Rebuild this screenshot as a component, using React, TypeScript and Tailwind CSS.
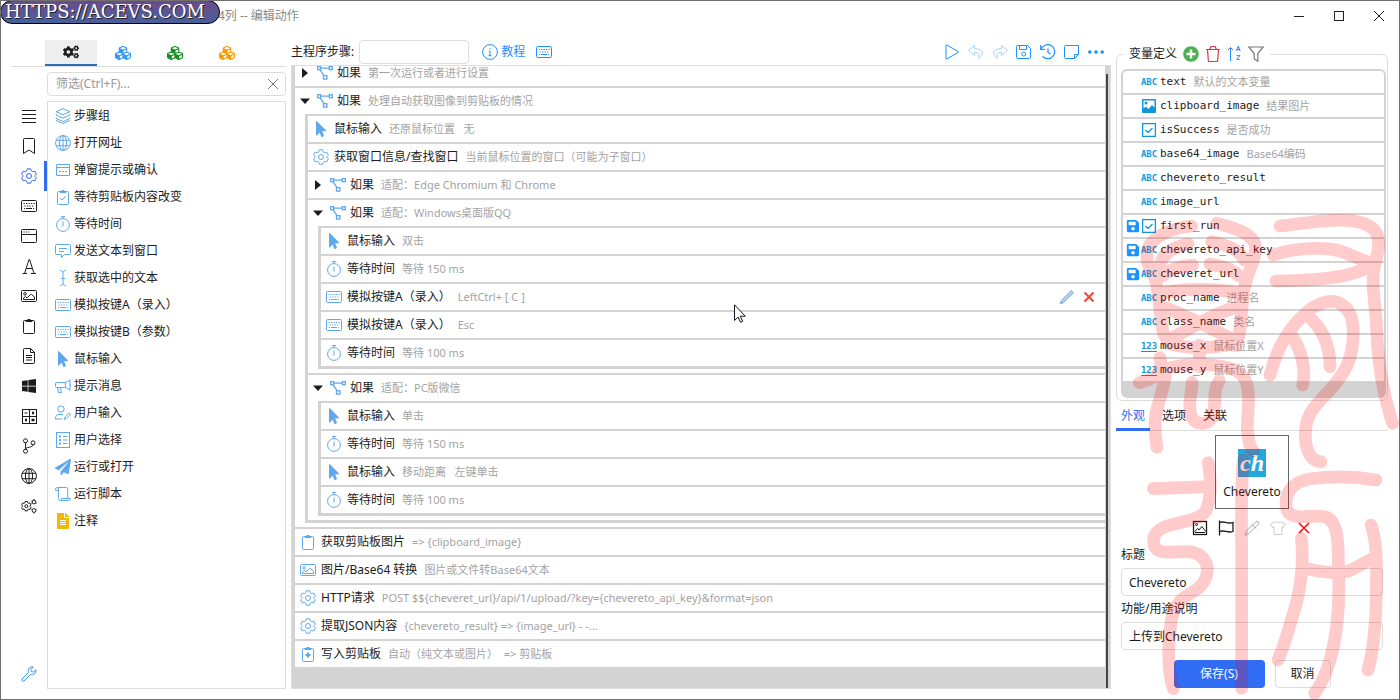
import type { ReactNode } from "react";
import {
  FaCogs,
  FaCubes,
  FaFileAlt,
  FaMousePointer,
  FaPaperPlane,
  FaPlusCircle,
  FaSave,
  FaWindows,
} from "react-icons/fa";

// 16x16 line icons
const glyphs: Record<string, ReactNode> = {
  menu: <path d="M1 2.500h14M1 6.500h14M1 10.500h14M1 14.500h14" />,
  bookmark: <path d="M2.500 1.500a1 1 0 0 1 1-1h9a1 1 0 0 1 1 1v14L8 12l-5.500 3.500z" />,
  gear: (
    <>
      <path d="M6.300.8h3.400l.5 2 1.500.9 2-.6 1.700 3L14 7.500v1l1.400 1.400-1.700 3-2-.6-1.500.9-.5 2H6.300l-.5-2-1.500-.9-2 .6-1.700-3L2 8.500v-1L.600 6.100l1.700-3 2 .6 1.500-.9z" />
      <circle cx="8" cy="8" r="2.500" />
    </>
  ),
  keyboard: (
    <>
      <rect x=".5" y="2.500" width="15" height="11" rx="1" />
      <path d="M2.500 5.500H14M3.500 8H13" strokeDasharray="1.300 1.200" />
      <path d="M3 10.500h1M5 10.500h6M12 10.500h1" />
    </>
  ),
  window: (
    <>
      <rect x=".5" y="1.500" width="15" height="13" rx="1" />
      <path d="M.5 6.500h15M2.500 4h1.200M4.900 4h1.200M7.300 4h1.200" />
    </>
  ),
  letter: <path d="M1.500 15.500h4.500M10 15.500h5M3.500 15.500 8 1.500h.6L13 15.500M5.200 10.500h6.200" />,
  image: (
    <>
      <rect x=".5" y="2.500" width="15" height="11" rx="1" />
      <circle cx="4" cy="5.800" r="1.300" />
      <path d="M2.500 11.500V10l2-1.500L6 10l3.500-3.500h1L13.500 9v2.500z" />
    </>
  ),
  clipboard: (
    <>
      <rect x="2.500" y="2.500" width="11" height="13" rx="1" />
      <path d="M5 2.500h6v1H5zM6.500 1.500h3" />
    </>
  ),
  clipCheck: (
    <>
      <rect x="2.500" y="2.500" width="11" height="13" rx="1" />
      <path d="M5 2.500h6v1H5zM6.500 1.500h3M5 9l2 2 4-4" />
    </>
  ),
  clipPlus: (
    <>
      <rect x="2.500" y="2.500" width="11" height="13" rx="1" />
      <path d="M5 2.500h6v1H5zM6.500 1.500h3" />
      <path d="M8 6.500v5M5.500 9h5" strokeWidth="2" />
    </>
  ),
  file: <path d="M3.500.5h6l4 4v10a1 1 0 0 1-1 1h-9a1 1 0 0 1-1-1v-13a1 1 0 0 1 1-1zM9.500.5v4h4M5 7.500h6M5 9.500h6M5 12h6" />,
  calc: (
    <>
      <rect x="1.500" y="1.500" width="14" height="14" />
      <path d="M8.500 1.500v14M1.500 8.500h14M3.500 5h3" />
      <path d="M4 12h2M11 5h2M10.500 12h3" strokeWidth="2.600" />
    </>
  ),
  branch: (
    <>
      <circle cx="4.500" cy="2.800" r="2" />
      <circle cx="12" cy="4.800" r="2" />
      <circle cx="4.500" cy="13.200" r="2" />
      <path d="M4.500 4.800v6.400M12 6.800c0 3-7.500 2-7.500 4.400" />
    </>
  ),
  globe: (
    <>
      <circle cx="8" cy="8" r="7.400" />
      <ellipse cx="8" cy="8" rx="3.600" ry="7.400" />
      <path d="M8 .6v14.800M1.300 5.300h13.400M1.300 10.700h13.400" />
    </>
  ),
  cogs: (
    <>
      <path d="M4.200 3.500h2.200l.3 1.300 1 .5 1.200-.4 1.100 2-.9.900v.8l.9.900-1.100 2-1.200-.4-1 .5-.3 1.300H4.200l-.3-1.300-1-.5-1.200.4-1.100-2 .9-.9v-.8l-.9-.9 1.100-2 1.200.4 1-.5z" />
      <circle cx="5.300" cy="8.200" r="1.500" />
      <circle cx="13" cy="4" r="1.900" />
      <circle cx="13" cy="12.500" r="1.900" />
      <path d="M13 1.200v1M10.500 2.800l.8.400M10.500 5.300l.8-.4M15.500 5.300l-.7-.4M13 14.400v1M10.500 11.300l.8.400M15.500 11.300l-.7.400" />
    </>
  ),
  wrench: <path d="M14.800 3.800a4 4 0 0 1-5.300 4.700L3 15a1.500 1.500 0 0 1-2-2l6.500-6.500A4 4 0 0 1 12.300 1l-2.500 2.600.5 2 2 .5z" />,
  layers: <path d="m8 .7 7 3-7 3-7-3zM1.200 6.200 1 7l7 3.200L15 7l-.2-.8M1.200 9.500l-.2.900 7 3.200 7-3.200-.2-.9M1 12.400l7 3.100 7-3.100" />,
  dialog: (
    <>
      <rect x="1.500" y="2.500" width="13" height="11" rx=".5" />
      <path d="M4 9.500h8" strokeDasharray="2 1" />
      <path d="M1.500 5.500h13" />
    </>
  ),
  timer: (
    <>
      <circle cx="8" cy="9" r="6.400" />
      <path d="M8 5.500v5M8 2.500v-2M6 .6h4" />
    </>
  ),
  message: <path d="M1.500 1.500h13a1 1 0 0 1 1 1v8a1 1 0 0 1-1 1H9.500l-3 3v-3h-5a1 1 0 0 1-1-1v-8a1 1 0 0 1 1-1zM4 5.500h8M4 8.500h5" />,
  cursorText: <path d="M5 .6c2 0 3 .6 3 1.900v11c0 1.300-1 1.900-3 1.900M11 .6c-2 0-3 .6-3 1.900M8 13.500c0 1.300 1 1.900 3 1.900M6 8.500h4" />,
  megaphone: <path d="M15 1.500v11M15 2l-4.500 2.500h-9a1 1 0 0 0-1 1v3a1 1 0 0 0 1 1h9L15 12M10.500 4.500v5M2.500 9.500l1 5h3.200l-1-2.500V9.500M15 6c1 .5 1 2 0 2.500" />,
  userEdit: (
    <>
      <circle cx="6" cy="4" r="3.200" />
      <path d="M8 9.500H4c-2 0-3.500 1.500-3.500 3.500v1h7M9.500 14.500l.5-2.500 4-4 1.500 1.500-4 4z" />
    </>
  ),
  options: (
    <>
      <rect x="1.500" y=".5" width="13" height="15" />
      <path d="M4 4.500h2M4 8h2M4 11.500h2" strokeWidth="2" />
      <path d="M8 4.500h4.500M8 8h4.500M8 11.500h4.500" />
    </>
  ),
  scroll: <path d="M3.500 4.500h-3v-1a1.500 1.500 0 0 1 3-.5v9.500c0 1.200 1 2 2 2h8c1 0 2-.8 2-2H6.500c0 1.200-.5 2-1.500 2M2.200 1.500h9a1.500 1.500 0 0 1 1.500 1.500v9" />,
  flow: (
    <>
      <rect x=".7" y="1.700" width="3" height="3" strokeWidth="1.300" />
      <rect x="12.300" y="1.700" width="3" height="3" strokeWidth="1.300" />
      <rect x="6.500" y="10.700" width="3.400" height="3.400" strokeWidth="1.300" />
      <path d="M3.700 3.200h8.600M3 4.700l4 6" strokeWidth="1.300" />
    </>
  ),
  info: (
    <>
      <circle cx="8" cy="8" r="7.400" />
      <path d="M8 4v1.300M6.800 7H8v4.500M6.500 11.700h3" />
    </>
  ),
  play: <path d="M2 1.300v13.400a.5.5 0 0 0 .7.300L14.300 8.400a.5.500 0 0 0 0-.8L2.700 1a.5.500 0 0 0-.7.300z" />,
  undo: <path d="M6.500 1.500.600 6.500l5.900 5v-3c4.500 0 5.500 1.500 4 6 5.500-3.500 6-9.500-4-10z" />,
  redo: <path d="M9.500 1.500l5.900 5-5.900 5v-3c-4.500 0-5.500 1.500-4 6-5.500-3.500-6-9.500 4-10z" />,
  save: (
    <>
      <path d="M2 1.500h9.500l3 3V13.500a1 1 0 0 1-1 1h-12a1 1 0 0 1-1-1v-11a1 1 0 0 1 1-1zM3.500 1.500v4h7v-4" />
      <circle cx="7.700" cy="10" r="2" />
    </>
  ),
  history: <path d="M.7 1v4.500h4.500M1.200 5A7 7 0 1 1 2.500 12.300M8 4.500v4l2.500 1.500" strokeWidth="1.200" />,
  note: <path d="M1.500 1.500h13v9l-4 4h-9a1 1 0 0 1-1-1v-11a1 1 0 0 1 1-1zM14.500 10.500h-4v4" />,
  dots: (
    <g fill="currentColor" stroke="none">
      <circle cx="1.800" cy="8" r="1.800" />
      <circle cx="8" cy="8" r="1.800" />
      <circle cx="14.200" cy="8" r="1.800" />
    </g>
  ),
  trash: <path d="M1 3.500h14M2.500 3.500l.8 11a1 1 0 0 0 1 1h7.400a1 1 0 0 0 1-1l.8-11M4.500 3.500l1.500-3h4l1.500 3" strokeWidth="1.200" />,
  filter: <path d="M.8 1h14.400L9.800 7.500v7.700L6.200 13V7.500z" strokeWidth="1.200" />,
  close: <path d="m3 3 10 10M13 3 3 13" />,
  picture: (
    <>
      <rect x="1.500" y="1.500" width="13" height="13" strokeWidth="1.300" />
      <path d="m2.500 12 3.200-3.500L7 10l2.800-3.500 4 5M3 12.500h10" />
      <circle cx="4.500" cy="4.500" r="1" />
    </>
  ),
  flag: <path d="M1.500.5v15M1.500 2.500c5-2 7 2 13.500 0v9c-6 2-8-2-13.500 0" strokeWidth="1.300" />,
  picker: <path d="M9 4.500 2.500 11l-.8 2.300-1 1.200.9.900 1.200-1 2.200-.9L11.500 7M7.500 4l4.500 4.500M9.500 4.500 12 1.600a1.800 1.800 0 0 1 2.500 2.500L11.500 7" />,
  shirt: <path d="M5.500 1.500c1 1.500 4 1.500 5 0l4.900 2.700-1.900 3.300-1.500-.7v7.700H4V6.800l-1.500.7L.600 4.200z" />,
  pencil: <path d="m2.300 11.700 9.900-10.200 2.300 2.300L4.300 13.700 1.300 14.700z" fill="#a9d4fa" stroke="#5b9bd5" strokeWidth=".8" />,
  checked: (
    <>
      <rect x="1.600" y="1.600" width="12.800" height="12.800" strokeWidth="1.300" />
      <path d="m4.500 8 2.500 2.500L11.500 6" strokeWidth="1.300" />
    </>
  ),
};

function Glyph({ name, className = "" }: { name: string; className?: string }) {
  const size = `size-4 shrink-0 ${className}`;
  if (name === "pointer") return <FaMousePointer className={size} />;
  if (name === "plane") return <FaPaperPlane className={size} />;
  if (name === "windows") return <FaWindows className={size} />;
  if (name === "remark") return <FaFileAlt className="size-4 shrink-0 text-[#f0b800]" />;
  return (
    <svg viewBox="0 0 16 16" fill="none" stroke="currentColor" strokeWidth="1" className={size} aria-hidden="true">
      {glyphs[name]}
    </svg>
  );
}

const rail = [
  "menu", "bookmark", "gear", "keyboard", "window", "letter", "image",
  "clipboard", "file", "windows", "calc", "branch", "globe", "cogs",
];

const modules = [
  ["layers", "步骤组"],
  ["globe", "打开网址"],
  ["dialog", "弹窗提示或确认"],
  ["clipCheck", "等待剪贴板内容改变"],
  ["timer", "等待时间"],
  ["message", "发送文本到窗口"],
  ["cursorText", "获取选中的文本"],
  ["keyboard", "模拟按键A（录入）"],
  ["keyboard", "模拟按键B（参数）"],
  ["pointer", "鼠标输入"],
  ["megaphone", "提示消息"],
  ["userEdit", "用户输入"],
  ["options", "用户选择"],
  ["plane", "运行或打开"],
  ["scroll", "运行脚本"],
  ["remark", "注释"],
];

type Step = {
  icon: string;
  title: string;
  desc: string;
  open?: boolean;
  active?: boolean;
  children?: Step[];
};

const steps: Step[] = [
  { icon: "flow", title: "如果", desc: "第一次运行或者进行设置", open: false },
  {
    icon: "flow",
    title: "如果",
    desc: "处理自动获取图像到剪贴板的情况",
    open: true,
    children: [
      { icon: "pointer", title: "鼠标输入", desc: "还原鼠标位置   无" },
      { icon: "gear", title: "获取窗口信息/查找窗口", desc: "当前鼠标位置的窗口（可能为子窗口）" },
      { icon: "flow", title: "如果", desc: "适配：Edge Chromium 和 Chrome", open: false },
      {
        icon: "flow",
        title: "如果",
        desc: "适配：Windows桌面版QQ",
        open: true,
        children: [
          { icon: "pointer", title: "鼠标输入", desc: "双击" },
          { icon: "timer", title: "等待时间", desc: "等待 150 ms" },
          { icon: "keyboard", title: "模拟按键A（录入）", desc: "LeftCtrl+ [ C ]", active: true },
          { icon: "keyboard", title: "模拟按键A（录入）", desc: "Esc" },
          { icon: "timer", title: "等待时间", desc: "等待 100 ms" },
        ],
      },
      {
        icon: "flow",
        title: "如果",
        desc: "适配：PC版微信",
        open: true,
        children: [
          { icon: "pointer", title: "鼠标输入", desc: "单击" },
          { icon: "timer", title: "等待时间", desc: "等待 150 ms" },
          { icon: "pointer", title: "鼠标输入", desc: "移动距离   左键单击" },
          { icon: "timer", title: "等待时间", desc: "等待 100 ms" },
        ],
      },
    ],
  },
  { icon: "clipboard", title: "获取剪贴板图片", desc: "=> {clipboard_image}" },
  { icon: "image", title: "图片/Base64 转换", desc: "图片或文件转Base64文本" },
  { icon: "gear", title: "HTTP请求", desc: "POST $${cheveret_url}/api/1/upload/?key={chevereto_api_key}&format=json" },
  { icon: "gear", title: "提取JSON内容", desc: "{chevereto_result} => {image_url} - -..." },
  { icon: "clipPlus", title: "写入剪贴板", desc: "自动（纯文本或图片）  => 剪贴板" },
];

const variables = [
  { type: "text", name: "text", note: "默认的文本变量" },
  { type: "image", name: "clipboard_image", note: "结果图片" },
  { type: "bool", name: "isSuccess", note: "是否成功" },
  { type: "text", name: "base64_image", note: "Base64编码" },
  { type: "text", name: "chevereto_result" },
  { type: "text", name: "image_url" },
  { type: "bool", name: "first_run", saved: true },
  { type: "text", name: "chevereto_api_key", saved: true },
  { type: "text", name: "cheveret_url", saved: true },
  { type: "text", name: "proc_name", note: "进程名" },
  { type: "text", name: "class_name", note: "类名" },
  { type: "number", name: "mouse_x", note: "鼠标位置X" },
  { type: "number", name: "mouse_y", note: "鼠标位置Y" },
];

function StepList({ items }: { items: Step[] }) {
  return (
    <ul>
      {items.map((step, i) => (
        <li key={i} className="border-b-2 border-[#d3d3d3] bg-white last:border-b-0">
          <div className="flex h-[26px] items-center px-[5px]">
            {step.open !== undefined && (
              <button type="button" aria-label="展开或折叠" className="mr-[7px] flex w-[10px] justify-center">
                <svg viewBox="0 0 10 10" className="size-[10px] fill-[#1c1c1c]">
                  {step.open ? <path d="M0 2.500h10l-5 5.500z" /> : <path d="M2 0l6 5-6 5z" />}
                </svg>
              </button>
            )}
            <Glyph name={step.icon} className="text-[#5ea8ee]" />
            <span className={step.open === undefined ? "ml-[5px]" : "ml-1"}>{step.title}</span>
            <span className="ml-[7px] truncate text-[11px] whitespace-pre text-[#a3a3a3]">{step.desc}</span>
            {step.active && (
              <span className="mr-[3px] ml-auto flex items-center gap-[6px]">
                <button type="button" aria-label="编辑"><Glyph name="pencil" /></button>
                <button type="button" aria-label="删除" className="text-[#f44336]">
                  <svg viewBox="0 0 16 16" fill="none" stroke="currentColor" strokeWidth="2" className="size-4">
                    <path d="m3.500 3.500 9 9M12.500 3.500l-9 9" />
                  </svg>
                </button>
              </span>
            )}
          </div>
          {step.children && (
            <div className="pb-1">
              <div className="ml-[10px] border-t-2 border-b-3 border-l-3 border-[#d3d3d3]">
                <StepList items={step.children} />
              </div>
            </div>
          )}
        </li>
      ))}
    </ul>
  );
}

function VariableIcon({ type }: { type: string }) {
  if (type === "bool") return <Glyph name="checked" />;
  if (type === "image") {
    return (
      <svg viewBox="0 0 16 16" className="size-4 shrink-0">
        <rect x="1" y="1" width="14" height="14" rx="1" fill="currentColor" />
        <path d="M2.500 2.500h11v7L11 7l-3.500 4L5 8.500l-2.500 2z" fill="#fff" />
        <circle cx="5" cy="5" r="1.500" fill="currentColor" />
      </svg>
    );
  }
  return (
    <span
      className={`flex h-3 w-4 shrink-0 items-center justify-center font-['DejaVu_Sans_Mono',monospace] text-[9px] font-bold ${
        type === "number" ? "border-b border-current" : ""
      }`}
    >
      {type === "number" ? "123" : "ABC"}
    </span>
  );
}

function LeftPanel() {
  return (
    <aside className="flex w-[275px] shrink-0 flex-col">
      <nav className="flex border-b border-[#ddd] pl-[34px]">
        <button type="button" aria-label="常用" className="flex h-[26px] w-[52px] items-center justify-center border-b-2 border-[#2a6fb5] bg-[#eee]">
          <FaCogs className="size-4" />
        </button>
        <button type="button" aria-label="蓝色模块" className="flex h-[26px] w-[52px] items-center justify-center text-[#3296fa]">
          <FaCubes className="size-4" />
        </button>
        <button type="button" aria-label="绿色模块" className="flex h-[26px] w-[52px] items-center justify-center text-[#12921c]">
          <FaCubes className="size-4" />
        </button>
        <button type="button" aria-label="橙色模块" className="flex h-[26px] w-[52px] items-center justify-center text-[#fa9a00]">
          <FaCubes className="size-4" />
        </button>
      </nav>
      <div className="flex min-h-0 flex-1">
        <div className="flex w-9 shrink-0 flex-col pt-[34px]">
          {rail.map((name) => (
            <button
              key={name}
              type="button"
              aria-label={name}
              className={`flex h-[30px] items-center justify-center ${
                name === "gear" ? "border-r-3 border-[#316cf4] pl-[3px] text-[#316cf4]" : ""
              }`}
            >
              <Glyph name={name} />
            </button>
          ))}
          <button type="button" aria-label="工具" className="mt-auto flex h-[30px] items-center justify-center text-[#3296fa]">
            <Glyph name="wrench" />
          </button>
        </div>
        <div className="flex min-w-0 flex-1 flex-col gap-[5px] pt-[5px]">
          <div className="flex h-6 items-center rounded-sm border border-[#ddd] px-2">
            <input aria-label="筛选" placeholder="筛选(Ctrl+F)..." className="min-w-0 flex-1 outline-none placeholder:text-[#999]" />
            <button type="button" aria-label="清除" className="-mr-1 text-[#777]"><Glyph name="close" /></button>
          </div>
          <ul className="flex-1 border border-[#ddd]">
            {modules.map(([icon, label]) => (
              <li key={label} className="flex h-[27px] items-center gap-[3px] px-[7px]">
                <Glyph name={icon} className="text-[#5ea8ee]" />
                {label}
              </li>
            ))}
          </ul>
        </div>
      </div>
    </aside>
  );
}

function Editor() {
  return (
    <main className="flex min-w-0 flex-1 flex-col">
      <div className="flex h-[25px] shrink-0 items-center pr-[7px] pb-px text-[#1e90ff]">
        <label htmlFor="step-name" className="text-[#1c1c1c]">主程序步骤:</label>
        <input id="step-name" className="ml-[5px] h-6 w-[110px] rounded-sm border border-[#ddd] px-2 text-[#1c1c1c] outline-none" />
        <a href="#help" className="ml-[13px] flex items-center gap-[3px]">
          <Glyph name="info" />
          教程
        </a>
        <button type="button" aria-label="键盘" className="ml-[11px]"><Glyph name="keyboard" /></button>
        <div className="ml-auto flex items-center gap-2">
          <button type="button" aria-label="运行"><Glyph name="play" /></button>
          <button type="button" aria-label="撤销" disabled className="opacity-40"><Glyph name="undo" /></button>
          <button type="button" aria-label="重做" disabled className="opacity-40"><Glyph name="redo" /></button>
          <button type="button" aria-label="保存"><Glyph name="save" /></button>
          <button type="button" aria-label="历史"><Glyph name="history" /></button>
          <button type="button" aria-label="备注"><Glyph name="note" /></button>
          <button type="button" aria-label="更多"><Glyph name="dots" /></button>
        </div>
      </div>
      <div className="flex min-h-0 flex-1 overflow-hidden border border-[#ddd] bg-[#d3d3d3] pl-[3px]">
        <div className="-mt-1.5 min-w-0 flex-1">
          <StepList items={steps} />
        </div>
        <div className="flex w-[5px] pt-2 pl-px">
          <div className="w-[2px] bg-[#444]" />
        </div>
      </div>
    </main>
  );
}

function VariablePanel() {
  return (
    <fieldset className="min-w-0 rounded-md border border-[#ddd] pr-px pb-[2px] pl-1">
      <legend className="ml-[2px] flex h-[18px] items-center px-[6px]">
        变量定义
        <button type="button" aria-label="添加变量" className="ml-[6px] text-[#4caf50]"><FaPlusCircle className="size-4" /></button>
        <button type="button" aria-label="删除变量" className="ml-[6px] text-[#dc3545]"><Glyph name="trash" /></button>
        <button type="button" aria-label="排序" className="ml-[6px] flex items-center text-[#1e90ff]">
          <svg viewBox="0 0 6 16" fill="none" stroke="currentColor" className="h-4 w-[7px]">
            <path d="M3 15V1.500M.5 4 3 1.500 5.500 4" />
          </svg>
          <span className="flex w-2 flex-col text-center font-['Roboto',sans-serif] text-[7px] leading-[9px] font-bold">
            <span>A</span>
            <span>Z</span>
          </span>
        </button>
        <button type="button" aria-label="筛选变量" className="ml-[6px] text-[#777]"><Glyph name="filter" /></button>
      </legend>
      <ul className="mt-[6px] overflow-hidden rounded-md border-2 border-[#d3d3d3] bg-[#d3d3d3] pb-[13px]">
        {variables.map((v) => (
          <li key={v.name} className="flex h-6 items-center border-b-2 border-[#d3d3d3] bg-white pl-[3px]">
            <span className="flex w-[15px] shrink-0 text-[#1e90ff]">{v.saved && <FaSave className="size-[14px]" />}</span>
            <span className="text-[#1296db]"><VariableIcon type={v.type} /></span>
            <span className="ml-[3px] font-['DejaVu_Sans_Mono',monospace] text-[11px]">{v.name}</span>
            <span className="ml-[7px] text-[11px] text-[#a3a3a3]">{v.note}</span>
          </li>
        ))}
      </ul>
    </fieldset>
  );
}

function Properties() {
  return (
    <section className="flex flex-col">
      <div className="flex h-[30px] gap-[7px] border-b border-[#ddd]">
        <button type="button" className="-mb-px border-b-3 border-[#316cf4] px-[5px] pt-[2px] text-[#316cf4]">外观</button>
        <button type="button" className="px-[5px]">选项</button>
        <button type="button" className="px-[5px]">关联</button>
      </div>
      <div className="mt-[4px] flex h-[74px] w-[74px] flex-col items-center justify-end gap-[7px] self-center border border-[#666] pb-2">
        <span className="flex size-7 items-center justify-center bg-[#23a8e0] font-['Liberation_Serif',serif] text-[24px] leading-6 font-bold text-white italic">ch</span>
        <span className="leading-4">Chevereto</span>
      </div>
      <div className="mt-[11px] flex justify-center gap-[10px]">
        <button type="button" aria-label="选择图片"><Glyph name="picture" /></button>
        <button type="button" aria-label="选择图标"><Glyph name="flag" /></button>
        <button type="button" aria-label="取色" className="text-[#aaa]"><Glyph name="picker" /></button>
        <button type="button" aria-label="皮肤" className="text-[#ccc]"><Glyph name="shirt" /></button>
        <button type="button" aria-label="清除图标" className="text-[#ee1111]">
          <svg viewBox="0 0 16 16" fill="none" stroke="currentColor" strokeWidth="1.600" className="size-4">
            <path d="m3 3 10 10M13 3 3 13" />
          </svg>
        </button>
      </div>
      <form className="flex flex-col px-[5px]">
        <label htmlFor="title" className="mt-[9px] leading-5">标题</label>
        <input id="title" defaultValue="Chevereto" className="mt-[3px] h-7 rounded-sm border border-[#ddd] px-[7px] outline-none" />
        <label htmlFor="purpose" className="mt-[3px] leading-5">功能/用途说明</label>
        <input id="purpose" defaultValue="上传到Chevereto" className="mt-[3px] h-7 rounded-sm border border-[#ddd] px-[7px] outline-none" />
        <div className="mt-[10px] flex justify-center gap-[10px]">
          <button type="submit" className="h-7 w-[91px] rounded-sm bg-[#316cf4] text-white">保存(S)</button>
          <button type="button" className="h-7 w-14 rounded-sm border border-[#ddd]">取消</button>
        </div>
      </form>
    </section>
  );
}

// Seal-script stamp lying over the lower right corner
function SealMark() {
  return (
    <svg
      viewBox="0 0 870 1470"
      fill="none"
      stroke="#ff0000"
      strokeWidth="38"
      strokeLinecap="round"
      strokeLinejoin="round"
      className="pointer-events-none absolute -right-px -bottom-px h-[490px] w-[290px] opacity-20"
      aria-hidden="true"
    >
      <path d="M245 48C190 52 120 80 112 125S135 185 140 225s10 70 14 110 10 45 26 60" />
      <path d="M320 40c50 12 112 30 116 70s-30 85-36 140-6 90-14 130-10 25-16 25" />
      <path d="M235 102c-45 8-75 25-85 62M305 95c50 10 85 25 98 55M248 165c-40 5-70 12-90 32M300 162c40 6 70 18 85 35" />
      <path d="M150 250c70-16 170-16 240 0M160 292c70 22 150 70 215 98M385 290c-60 12-150 70-215 102M175 400c60 18 140 16 205-2" />
      <path d="M268 405v65M88 518c40-10 75-25 62-75M165 478c60-22 170-18 215 5 55 30 30 120 32 170 2 40 10 65 18 70" />
      <path d="M165 500c-5 50-30 90-30 140 0 30 2 50 6 72M328 512c-20 30-10 50-16 90-6 50-66 52-72 0-4-40 8-60 6-85" />
      <path d="M510 48c80-8 180-30 250-8 60 20 48 70 38 110-20 60 0 130 2 210 4 90 18 190 48 280" />
      <path d="M490 135c60-20 160-30 220-5 30 12 50 25 82 30M498 213c90-2 240-5 285-50" />
      <path d="M480 495c20-80 60-150 125-200 80-50 125 0 125 70 0 90-30 130-75 180-50 50-75 80-68 150 5 40 25 60 46 60" />
      <path d="M540 370c30 40 50 100 38 155M590 315c50 40 70 95 70 155" />
      <path d="M295 758c10 60 8 110-8 145-25 45-150 25-156 85-4 60 70 30 115 38 60 15 60 80 10 115-30 20-62 30-72 90-10 70-12 150 6 205" />
      <path d="M130 836l168-6M400 750c-8 80-5 150-5 300v385" />
      <path d="M798 810c-70-12-130-12-195-4-50 8-75 35-75 75 0 60 70 32 110 38 55 8 45 100 48 165 4 130-10 280-72 366" />
      <path d="M574 985c8 70-2 150-18 205-15 50-30 110-52 160M590 1076c60 14 90 14 125 8 30-14 45-25 72-38M783 945c16 40 18 110 16 180 0 90-4 180-25 255" />
    </svg>
  );
}

export default function App() {
  return (
    <div className="relative flex h-screen flex-col overflow-hidden border border-[#707070] bg-white font-['Noto_Sans','Noto_Sans_CJK_SC',sans-serif] text-[12px] leading-4 text-[#1c1c1c]">
      <header className="flex h-[39px] shrink-0 items-start justify-between">
        <h1 className="pt-[7px] pl-[217px] text-[#888]">4列 -- 编辑动作</h1>
        <div className="flex">
          <button type="button" aria-label="最小化" className="flex h-[30px] w-10 items-center justify-center">
            <span className="w-[10px] border-t border-[#222]" />
          </button>
          <button type="button" aria-label="最大化" className="flex h-[30px] w-10 items-center justify-center">
            <span className="size-[10px] border border-[#222]" />
          </button>
          <button type="button" aria-label="关闭" className="flex h-[30px] w-10 items-center justify-center">
            <Glyph name="close" />
          </button>
        </div>
      </header>
      <div className="flex min-h-0 flex-1 gap-[5px] pr-[11px] pb-[10px] pl-[10px]">
        <LeftPanel />
        <Editor />
        <div className="flex w-[272px] shrink-0 flex-col pt-[5px]">
          <VariablePanel />
          <Properties />
        </div>
      </div>
      <div className="absolute -top-px -left-px flex h-6 w-[220px] items-center rounded-full border border-black bg-linear-to-b from-[#6b4a8c] to-[#46609a] pl-1 font-['DejaVu_Serif',serif] text-[18px] text-white text-shadow-[1px_1px_0_#222]">
        HTTPS://ACEVS.COM
      </div>
      <SealMark />
      <svg viewBox="0 0 12 19" className="pointer-events-none absolute top-[303px] left-[733px] h-[19px] w-3" aria-hidden="true">
        <path d="M.5.8v15.700l3.600-3.400 2.400 5.200 2.200-1-2.400-5.100h5z" fill="#fff" stroke="#112" />
      </svg>
    </div>
  );
}
